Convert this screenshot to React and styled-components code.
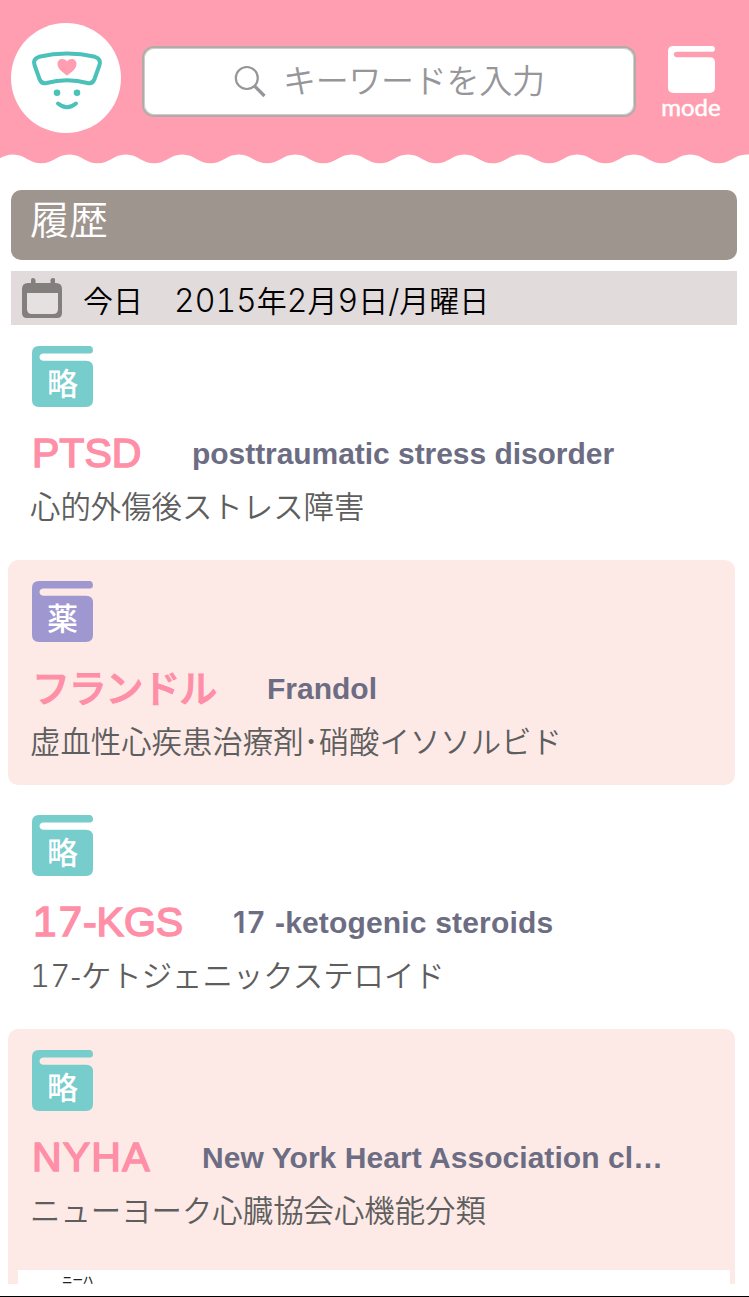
import React from 'react';
import styled, { createGlobalStyle } from 'styled-components';

const GlobalStyle = createGlobalStyle`
	* {
		box-sizing: border-box;
	}
	html {
		overflow: hidden;
	}
	body {
		margin: 0;
		background: #ffffff;
		font-family: 'Liberation Sans', 'Noto Sans CJK JP', sans-serif;
	}
`;

const Screen = styled.div`
	display: flex;
	flex-direction: column;
	width: 749px;
	height: 1297px;
	overflow: hidden;
	border-bottom: 1px solid #000000;
`;

const Header = styled.header`
	display: flex;
	align-items: flex-start;
	flex: none;
	height: 153px;
	padding: 23px 28px 0 11px;
	background: #ff9eb0;
`;

const Logo = styled.svg`
	flex: none;
	width: 110px;
	height: 110px;
`;

const SearchBox = styled.div`
	display: flex;
	align-items: center;
	flex: none;
	width: 494px;
	height: 71px;
	margin: 23px 0 0 21px;
	padding-left: 90px;
	border: 2px solid #b1aca8;
	border-radius: 12px;
	background: #ffffff;
	box-shadow: inset 0 0 0 1px #cfccc9;
`;

const SearchIcon = styled.svg`
	flex: none;
	width: 34px;
	height: 34px;
`;

const Placeholder = styled.span`
	margin: -6px 0 0 15px;
	color: #96969a;
	font-family: 'Noto Sans CJK JP', sans-serif;
	font-weight: 350;
	font-size: 33px;
	line-height: 48px;
	letter-spacing: -0.3px;
	white-space: nowrap;
`;

const ModeButton = styled.div`
	display: flex;
	flex-direction: column;
	align-items: center;
	flex: none;
	width: 62px;
	margin: 23px 0 0 24px;
	color: #ffffff;
	font-family: Lato, sans-serif;
	font-size: 24px;
	font-weight: 400;
	line-height: 27px;
	-webkit-text-stroke: 0.5px #ffffff;
`;

const BookShape = styled.svg`
	display: block;
	flex: none;
	width: ${(props) => props.$size}px;
	height: ${(props) => props.$size}px;
`;

const Wave = styled.svg`
	display: block;
	flex: none;
	width: 749px;
	height: 11px;
`;

const SectionTitle = styled.h1`
	flex: none;
	width: 726px;
	height: 70px;
	margin: 25.5px 0 0 11px;
	padding-left: 19px;
	border-radius: 10px;
	background: #9f958f;
	color: #ffffff;
	font-family: 'Noto Sans CJK JP', sans-serif;
	font-size: 39px;
	font-weight: 350;
	line-height: 54px;
`;

const DateBar = styled.div`
	display: flex;
	align-items: center;
	flex: none;
	width: 726px;
	height: 54px;
	margin: 11.5px 0 0 11px;
	padding-left: 11px;
	background: #e1dbdb;
	color: #000000;
	font-family: 'Noto Sans CJK JP', sans-serif;
	font-size: 30px;
	font-weight: 350;
	line-height: 54px;
	white-space: nowrap;
`;

const Calendar = styled.svg`
	flex: none;
	width: 40px;
	height: 41px;
`;

const Today = styled.span`
	margin: 2px 0 0 21px;
`;

const DateText = styled.span`
	margin: 2px 0 0 31px;
`;

const Digits = styled.span`
	font-family: Inter, sans-serif;
	font-size: ${(props) => props.$size}px;
	font-weight: ${(props) => props.$weight};
	font-feature-settings: 'tnum' ${(props) => (props.$tabular ? 1 : 0)};
	letter-spacing: ${(props) => props.$spacing || 0}px;
	line-height: 0;
`;

const List = styled.div`
	display: flex;
	flex-direction: column;
	gap: 9.4px;
	flex: none;
	width: 727px;
	height: 959px;
	margin-left: 8px;
	padding-top: 0.4px;
	overflow: hidden;
`;

const Entry = styled.article`
	flex: none;
	height: ${(props) => (props.$open ? 270 : 225)}px;
	padding: 21px 10px 0 22px;
	border-radius: 10px;
	background: ${(props) => (props.$tinted ? '#fdeae7' : 'transparent')};
`;

const Tag = styled.div`
	display: grid;
	width: 64px;

	> * {
		grid-area: 1 / 1;
	}
`;

const TagLabel = styled.span`
	z-index: 1;
	width: 65px;
	height: 61px;
	padding-top: 19px;
	color: #ffffff;
	font-family: 'Noto Sans CJK JP', sans-serif;
	font-size: 31px;
	font-weight: 500;
	line-height: 33px;
	text-align: center;
`;

const TagShape = styled(BookShape)`
	margin-left: 2px;
`;

const Heading = styled.div`
	display: flex;
	align-items: flex-start;
	height: 53px;
	margin-top: 20px;
	white-space: nowrap;
`;

const Term = styled.h2`
	flex: none;
	width: ${(props) => props.$width}px;
	margin: 0;
	padding-left: 2px;
	color: #ff8ea7;
	font-size: 41px;
	font-weight: 400;
	line-height: 53px;
	letter-spacing: ${(props) => props.$spacing || 0}px;
	-webkit-text-stroke: 1.5px #ff8ea7;
`;

const KanaTerm = styled(Term)`
	font-family: 'Noto Sans CJK JP', sans-serif;
	font-size: 38px;
	font-weight: 500;
	line-height: 48px;
	-webkit-text-stroke: 1px #ff8ea7;
`;

const FullName = styled.span`
	margin-top: -2px;
	color: #6c6d83;
	font-size: 30px;
	font-weight: 700;
	line-height: 57px;
	letter-spacing: ${(props) => props.$spacing || 0}px;
`;

const Meaning = styled.p`
	margin: 0;
	color: #5e5e5e;
	font-family: 'Noto Sans CJK JP', sans-serif;
	font-size: 30.4px;
	font-weight: 350;
	line-height: 50px;
	white-space: nowrap;
`;

const Detail = styled.div`
	height: 40px;
	margin: 36px -5px 0 -12px;
	padding-left: 44px;
	overflow: hidden;
	background: #ffffff;
	color: #222222;
	font-family: 'Noto Sans CJK JP', sans-serif;
	font-size: 10.5px;
	font-weight: 500;
	line-height: 20px;
`;

const entries = [
	{
		tag: '略',
		color: '#77cccc',
		term: 'PTSD',
		name: 'posttraumatic stress disorder',
		nameSpacing: -0.05,
		meaning: '心的外傷後ストレス障害',
		width: 162
	},
	{
		tag: '薬',
		color: '#9f98d0',
		term: 'フランドル',
		termSpacing: -1.2,
		name: 'Frandol',
		meaning: '虚血性心疾患治療剤･硝酸イソソルビド',
		width: 237,
		kana: true,
		tinted: true
	},
	{
		tag: '略',
		color: '#77cccc',
		digits: '17',
		term: '-KGS',
		nameDigits: '17',
		name: ' -ketogenic steroids',
		nameSpacing: 0.17,
		meaningDigits: '17',
		meaning: '-ケトジェニックステロイド',
		width: 203
	},
	{
		tag: '略',
		color: '#77cccc',
		term: 'NYHA',
		termSpacing: 1.2,
		name: 'New York Heart Association cl…',
		nameSpacing: 0.05,
		meaning: 'ニューヨーク心臓協会心機能分類',
		width: 172,
		tinted: true,
		reading: 'ニーハ'
	}
];

function wavePath() {
	const half = 28.22;
	let x = 13 - half * 2;
	let d = `M${x} 0V1.5`;
	while (x < 780) {
		d += `C${x + 12} 1.5 ${x + 16} 10.3 ${x + half} 10.3`;
		x += half;
		d += `C${x + 12} 10.3 ${x + 16} 1.5 ${x + half} 1.5`;
		x += half;
	}
	return `${d}V0Z`;
}

function Book({ size, color, as: Shape = BookShape }) {
	return (
		<Shape $size={size} viewBox="0 0 61 61">
			<path
				fill={color}
				d="M7 0H58.500Q61 1 61 4T58.500 7.500H11Q7.500 8 7.500 11T11 14.700H54Q61 14.700 61 21.500V54Q61 61 54 61H7Q0 61 0 54V7Q0 0 7 0Z"
			/>
		</Shape>
	);
}

function NurseLogo() {
	return (
		<Logo viewBox="0 0 110 110">
			<circle cx="55" cy="55" r="55" fill="#ffffff" />
			<g fill="none" stroke="#4bc1b9" strokeWidth="4" strokeLinecap="round" strokeLinejoin="round">
				<path d="M28 33.800Q56 27 84 33.800Q90.500 36 88.500 42L83.500 56Q81.500 61.500 76.500 60Q56 54.500 35.500 60Q30.500 61.500 28.500 56L23.500 42Q21.500 36 28 33.800Z" />
				<path d="M47 80.500Q56 88 65 80.500" />
			</g>
			<circle cx="46" cy="69.700" r="3.300" fill="#4bc1b9" />
			<circle cx="66" cy="69.700" r="3.300" fill="#4bc1b9" />
			<path fill="#ff9eb0" d="M56 52.500C51 49 46.500 45.500 46.500 41C46.500 35.500 53 34.500 56 38.500C59 34.500 65.500 35.500 65.500 41C65.500 45.500 61 49 56 52.500Z" />
		</Logo>
	);
}

function DateDigits({ children }) {
	return (
		<Digits $size={32} $weight={350} $tabular>
			{children}
		</Digits>
	);
}

function EntryRow({ entry }) {
	const TermText = entry.kana ? KanaTerm : Term;
	return (
		<Entry $tinted={entry.tinted} $open={Boolean(entry.reading)}>
			<Tag>
				<Book as={TagShape} size={61} color={entry.color} />
				<TagLabel>{entry.tag}</TagLabel>
			</Tag>
			<Heading>
				<TermText $width={entry.width} $spacing={entry.termSpacing}>
					{entry.digits && (
						<Digits $size={40} $weight={400} $spacing={-0.500} $tabular>
							{entry.digits}
						</Digits>
					)}
					{entry.term}
				</TermText>
				<FullName $spacing={entry.nameSpacing}>
					{entry.nameDigits && (
						<Digits $size={29.500} $weight={600} $spacing={2}>
							{entry.nameDigits}
						</Digits>
					)}
					{entry.name}
				</FullName>
			</Heading>
			<Meaning>
				{entry.meaningDigits && (
					<Digits $size={31} $weight={350} $spacing={0.200} $tabular>
						{entry.meaningDigits}
					</Digits>
				)}
				{entry.meaning}
			</Meaning>
			{entry.reading && <Detail>{entry.reading}</Detail>}
		</Entry>
	);
}

export default function App() {
	return (
		<Screen>
			<GlobalStyle />
			<Header>
				<NurseLogo />
				<SearchBox>
					<SearchIcon viewBox="0 0 34 34" fill="none" stroke="#96969a">
						<circle cx="12.800" cy="13" r="11" strokeWidth="2.200" />
						<path d="M20.500 21L30.500 31" strokeWidth="3.200" />
					</SearchIcon>
					<Placeholder>キーワードを入力</Placeholder>
				</SearchBox>
				<ModeButton>
					<Book size={47} color="#ffffff" />
					mode
				</ModeButton>
			</Header>
			<Wave viewBox="0 0 749 11">
				<path d={wavePath()} fill="#ff9eb0" />
			</Wave>
			<SectionTitle>履歴</SectionTitle>
			<DateBar>
				<Calendar viewBox="0 0 40 41">
					<path fill="#837f7c" d="M6 5H9V2Q9 0 11 0T13.500 2V5H28.500V2Q28.500 0 31 0T33 2V5H34Q40 5 40 11V35Q40 40 35 40H5Q0 40 0 35V11Q0 5 6 5Z" />
					<path fill="#e4e1e0" d="M5 15H36V31Q36 36 31 36H10Q5 36 5 31Z" />
				</Calendar>
				<Today>今日</Today>
				<DateText>
					<DateDigits>2015</DateDigits>年<DateDigits>2</DateDigits>月<DateDigits>9</DateDigits>日
					<DateDigits>/</DateDigits>月曜日
				</DateText>
			</DateBar>
			<List>
				{entries.map((entry) => (
					<EntryRow key={entry.term} entry={entry} />
				))}
			</List>
		</Screen>
	);
}
